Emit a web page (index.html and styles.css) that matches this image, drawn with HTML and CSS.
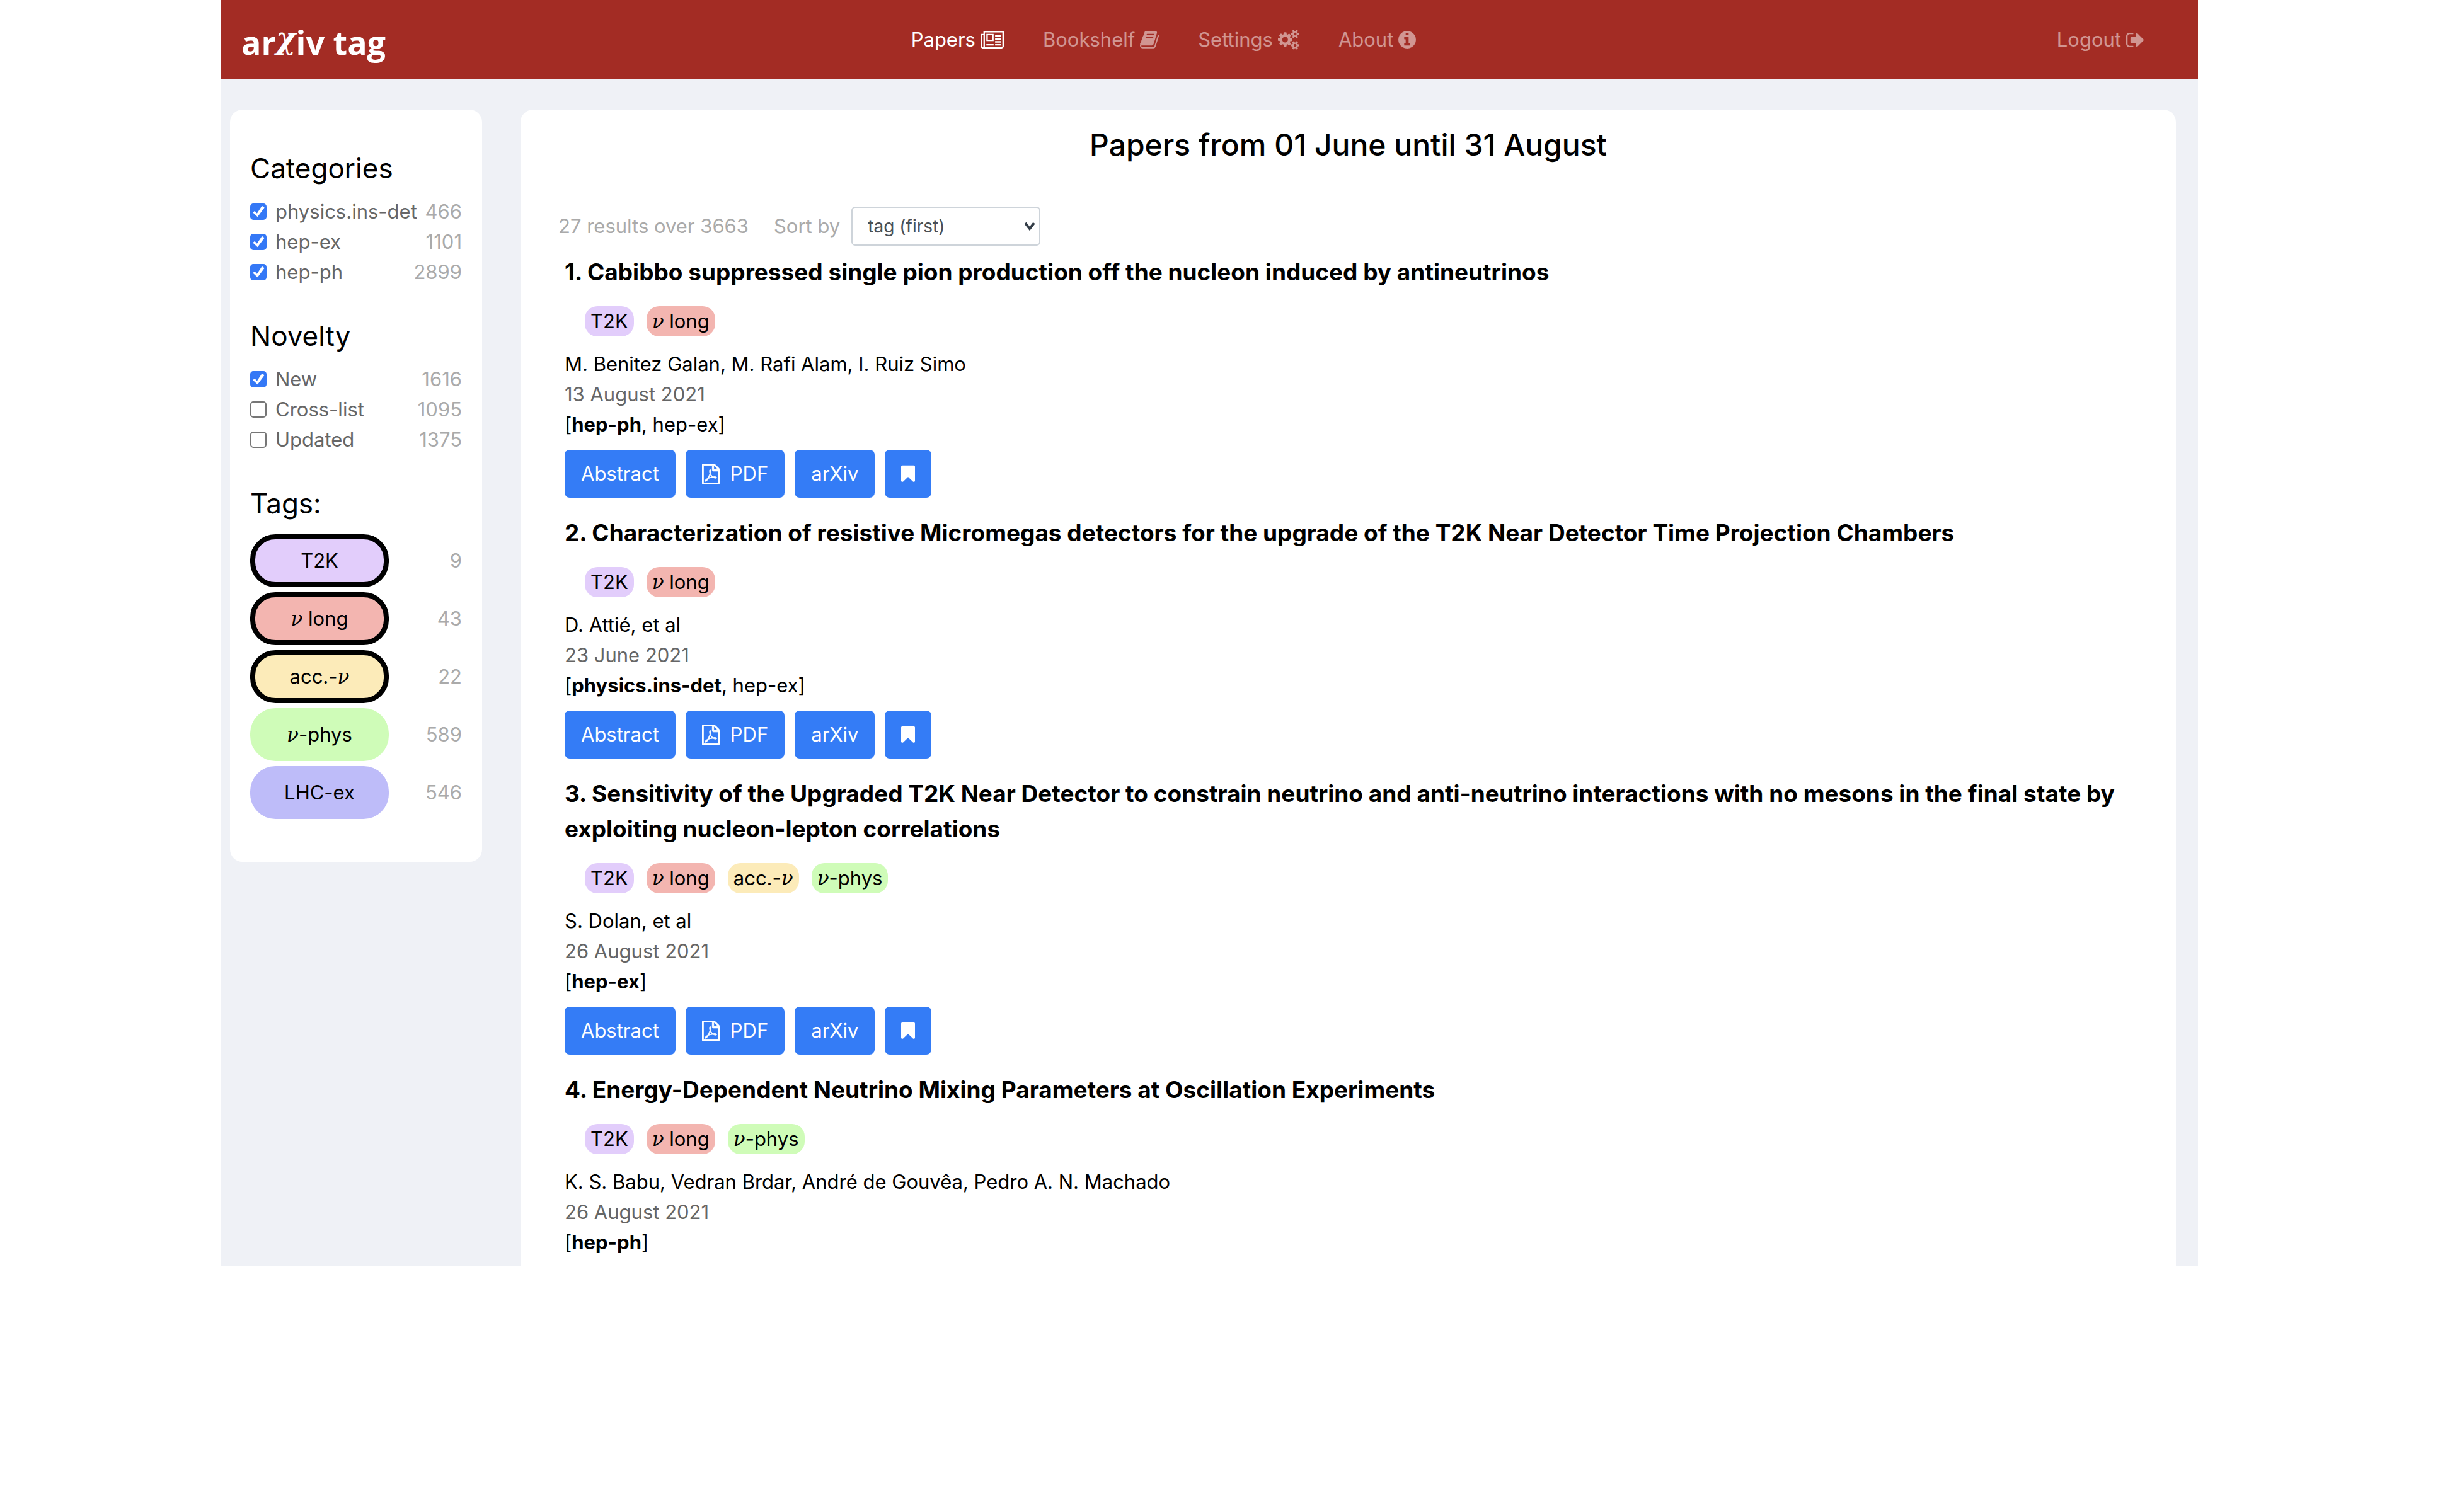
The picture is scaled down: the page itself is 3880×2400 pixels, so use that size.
FILE: index.html
```html
<!DOCTYPE html>
<html lang="en">
<head>
<meta charset="utf-8">
<title>arXiv tag</title>
<link rel="stylesheet" href="styles.css">
</head>
<body>
<svg class="sprite" aria-hidden="true">
  <symbol id="file-pdf" viewBox="0 0 1536 1792"><path d="M1468 380q28 28 48 76t20 88v1152q0 40-28 68t-68 28H96q-40 0-68-28t-28-68V96q0-40 28-68T96 0h896q40 0 88 20t76 48zm-444-244v376h376q-10-29-22-41l-313-313q-12-12-41-22zm384 1528V640H992q-40 0-68-28t-28-68V128H128v1536h1280zm-514-593q33 26 84 56 59-7 117-7 147 0 177 49 16 22 2 52 0 1-1 2l-2 2v1q-6 38-71 38-48 0-115-20t-130-53q-221 24-392 83-153 262-242 262-15 0-28-7l-24-12q-1-1-6-5-10-10-6-36 9-40 56-91.500t132-96.500q14-9 23 6 2 2 2 4 52-85 107-197 68-136 104-262-24-82-30.500-159.500t6.500-127.500q11-40 42-40h22q23 0 35 15 18 21 9 68-2 6-4 8 1 3 1 8v30q-2 123-14 192 55 164 146 238zm-576 411q52-24 137-158-51 40-87.500 84t-49.500 74zm398-920q-15 42-2 132 1-7 7-44 0-3 7-43 1-4 4-8-1-1-1-2t-1-2-1-3q-1-22-13-36 0 1-1 2v2zm-124 661q135-54 284-81-2-1-13-9.500t-16-13.500q-76-67-127-176-27 86-83 197-30 56-45 83zm646-16q-24-24-140-24 76 28 124 28 14 0 18-1 0-1-2-3z"/></symbol>
  <symbol id="bookmark" viewBox="0 0 1280 1536"><path d="M1164 0q23 0 44 9 33 13 52.500 41t19.500 62v1289q0 34-19.500 62t-52.500 41q-19 8-44 8-48 0-83-32l-441-424-441 424q-36 33-83 33-23 0-44-9-33-13-52.500-41T0 1401V112q0-34 19.500-62T72 9q21-9 44-9h1048z"/></symbol>
</svg>
<div class="app">
  <header class="navbar">
    <a class="brand" href="#">ar<span class="chi">χ</span>iv tag</a>
    <nav class="nav">
      <a class="nav-link active" href="#">Papers
        <svg class="icon-news" viewBox="0 0 2048 1536" aria-hidden="true"><path d="M1024 384H640v384h384V384zm128 768v128H512v-128h640zm0-896v640H512V256h640zm640 896v128h-512v-128h512zm0-256v128h-512V896h512zm0-256v128h-512V640h512zm0-256v128h-512V384h512zM256 1344V384H128v960q0 26 19 45t45 19 45-19 19-45zm1664 0V128H384v1216q0 33-11 64h1483q26 0 45-19t19-45zM2048 0v1344q0 80-56 136t-136 56H192q-80 0-136-56T0 1344V256h256V0h1792z"/></svg></a>
      <a class="nav-link" href="#">Bookshelf
        <svg class="icon-book" viewBox="0 0 1664 1536" aria-hidden="true"><path d="M1639 350q40 57 18 129l-275 906q-19 64-76.500 107.500T1183 1536H260q-77 0-148.500-53.500T12 1351q-24-67-2-127 0-4 3-27t4-37q1-8-3-21.500t-3-19.500q2-11 8-21t16.500-23.500T52 1051q23-38 45-91.500t30-91.500q3-10 .5-30t-.5-28q3-11 17-28t17-23q21-36 42-92t25-90q1-9-2.500-32t.5-28q4-13 22-30.500t22-22.500q19-26 42.500-84.500T340 283q1-8-3-25.500t-2-26.500q2-8 9-18t18-23 17-21q8-12 16.500-30.500t15-35 16-36 19.500-32T469.500 12t36-11.500T553 6l-1 3q38-9 51-9h761q74 0 114 56t18 130l-274 906q-36 119-71.500 153.500T1022 1280H153q-27 0-38 15-11 16-1 43 24 70 144 70h923q29 0 56-15.500t35-41.500l300-987q7-22 5-57 38 15 59 43zm-1064 2q-4 13 2 22.500t20 9.500h608q13 0 25.500-9.500T1247 352l21-64q4-13-2-22.500t-20-9.500H638q-13 0-25.500 9.500T596 288zm-83 256q-4 13 2 22.500t20 9.500h608q13 0 25.500-9.500T1164 608l21-64q4-13-2-22.500t-20-9.500H555q-13 0-25.500 9.500T513 544z"/></svg></a>
      <a class="nav-link" href="#">Settings
        <svg class="icon-cogs" viewBox="0 0 1920 1761" aria-hidden="true"><path d="M896 880q0-106-75-181t-181-75-181 75-75 181 75 181 181 75 181-75 75-181zm768 512q0-52-38-90t-90-38-90 38-38 90q0 53 37.500 90.500t90.500 37.500 90.500-37.500 37.500-90.500zm0-1024q0-52-38-90t-90-38-90 38-38 90q0 53 37.500 90.500T1536 496t90.500-37.500T1664 368zm-384 421v185q0 10-7 19.500t-16 10.500l-155 24q-11 35-32 76 34 48 90 115 7 11 7 20 0 12-7 19-23 30-82.500 89.500T999 1387q-11 0-21-7l-115-90q-37 19-77 31-11 108-23 155-7 24-30 24H547q-11 0-20-7.500t-10-17.500l-23-153q-34-10-75-31l-118 89q-7 7-20 7-11 0-21-8-144-133-144-160 0-9 7-19 10-14 41-53t47-61q-23-44-35-82l-152-24q-10-1-17-9.500T0 951V766q0-10 7-19.500T23 736l155-24q11-35 32-76-34-48-90-115-7-11-7-20 0-12 7-20 22-30 82-89t79-59q11 0 21 7l115 90q34-18 77-32 11-108 23-154 7-24 30-24h186q11 0 20 7.500t10 17.500l23 153q34 10 75 31l118-89q8-7 20-7 11 0 21 8 144 133 144 160 0 8-7 19-12 16-42 54t-45 60q23 48 34 82l152 23q10 2 17 10.500t7 19.500zm640 533v140q0 16-149 31-12 27-30 52 51 113 51 138 0 4-4 7-122 71-124 71-8 0-46-47t-52-68q-20 2-30 2t-30-2q-14 21-52 68t-46 47q-2 0-124-71-4-3-4-7 0-25 51-138-18-25-30-52-149-15-149-31v-140q0-16 149-31 13-29 30-52-51-113-51-138 0-4 4-7 4-2 35-20t59-34 30-16q8 0 46 46.500t52 67.500q20-2 30-2t30 2q51-71 92-112l6-2q4 0 124 70 4 3 4 7 0 25-51 138 17 23 30 52 149 15 149 31zm0-1024v140q0 16-149 31-12 27-30 52 51 113 51 138 0 4-4 7-122 71-124 71-8 0-46-47t-52-68q-20 2-30 2t-30-2q-14 21-52 68t-46 47q-2 0-124-71-4-3-4-7 0-25 51-138-18-25-30-52-149-15-149-31V298q0-16 149-31 13-29 30-52-51-113-51-138 0-4 4-7 4-2 35-20t59-34 30-16q8 0 46 46.500t52 67.500q20-2 30-2t30 2q51-71 92-112l6-2q4 0 124 70 4 3 4 7 0 25-51 138 17 23 30 52 149 15 149 31z"/></svg></a>
      <a class="nav-link" href="#">About
        <svg class="icon-info" viewBox="0 0 1536 1536" aria-hidden="true"><path d="M1024 1248v-160q0-14-9-23t-23-9h-96V544q0-14-9-23t-23-9H544q-14 0-23 9t-9 23v160q0 14 9 23t23 9h96v320h-96q-14 0-23 9t-9 23v160q0 14 9 23t23 9h448q14 0 23-9t9-23zM896 352V192q0-14-9-23t-23-9H672q-14 0-23 9t-9 23v160q0 14 9 23t23 9h192q14 0 23-9t9-23zm640 416q0 209-103 385.500T1153.500 1433 768 1536t-385.500-103T103 1153.500 0 768t103-385.500T382.500 103 768 0t385.500 103T1433 382.500 1536 768z"/></svg></a>
    </nav>
    <a class="nav-link logout" href="#">Logout
      <svg class="icon-logout" viewBox="0 0 1568 1280" aria-hidden="true"><path d="M640 1184q0 4 1 20t.5 26.500-3 23.500-10 19.500-20.500 6.500H288q-119 0-203.500-84.500T0 992V288Q0 169 84.500 84.500T288 0h320q13 0 22.500 9.500T640 32q0 4 1 20t.5 26.500-3 23.500-10 19.500T608 128H288q-66 0-113 47t-47 113v704q0 66 47 113t113 47h312l11.500 1 11.500 3 8 5.500 7 9 2 13.500zm928-544q0 26-19 45l-544 544q-19 19-45 19t-45-19-19-45V896H448q-26 0-45-19t-19-45V448q0-26 19-45t45-19h448V96q0-26 19-45t45-19 45 19l544 544q19 19 19 45z"/></svg></a>
  </header>

  <div class="layout">
    <aside class="card sidebar">
      <section class="filter">
        <h2>Categories</h2>
        <label class="check"><input type="checkbox" checked><span>physics.ins-det</span><span class="count">466</span></label>
        <label class="check"><input type="checkbox" checked><span>hep-ex</span><span class="count">1101</span></label>
        <label class="check"><input type="checkbox" checked><span>hep-ph</span><span class="count">2899</span></label>
      </section>
      <section class="filter">
        <h2>Novelty</h2>
        <label class="check"><input type="checkbox" checked><span>New</span><span class="count">1616</span></label>
        <label class="check"><input type="checkbox"><span>Cross-list</span><span class="count">1095</span></label>
        <label class="check"><input type="checkbox"><span>Updated</span><span class="count">1375</span></label>
      </section>
      <section class="filter">
        <h2>Tags:</h2>
        <div class="tag-list">
          <div class="tag-row"><button type="button" class="tag t2k selected">T2K</button><span class="count">9</span></div>
          <div class="tag-row"><button type="button" class="tag nulong selected"><i>ν</i> long</button><span class="count">43</span></div>
          <div class="tag-row"><button type="button" class="tag accnu selected">acc.-<i>ν</i></button><span class="count">22</span></div>
          <div class="tag-row"><button type="button" class="tag nuphys"><i>ν</i>-phys</button><span class="count">589</span></div>
          <div class="tag-row"><button type="button" class="tag lhc">LHC-ex</button><span class="count">546</span></div>
        </div>
      </section>
    </aside>

    <main class="card content">
      <h1>Papers from 01 June until 31 August</h1>
      <div class="toolbar">
        <span>27 results over 3663</span>
        <label for="sort">Sort by</label>
        <div class="select">
          <select id="sort"><option>tag (first)</option></select>
          <svg viewBox="0 0 18 20" aria-hidden="true"><path d="M2 5l7 9 7-9" fill="none" stroke="currentColor" stroke-width="4"/></svg>
        </div>
      </div>

      <article class="paper">
        <h3>1. Cabibbo suppressed single pion production off the nucleon induced by antineutrinos</h3>
        <div class="labels"><span class="label t2k">T2K</span><span class="label nulong"><i>ν</i> long</span></div>
        <p>M. Benitez Galan, M. Rafi Alam, I. Ruiz Simo</p>
        <p class="date">13 August 2021</p>
        <p>[<b>hep-ph</b>, hep-ex]</p>
        <div class="actions"><button type="button">Abstract</button><button type="button"><svg class="icon-pdf" aria-hidden="true"><use href="#file-pdf"/></svg>PDF</button><button type="button">arXiv</button><button type="button" aria-label="Bookmark"><svg class="icon-mark" aria-hidden="true"><use href="#bookmark"/></svg></button></div>
      </article>

      <article class="paper">
        <h3>2. Characterization of resistive Micromegas detectors for the upgrade of the T2K Near Detector Time Projection Chambers</h3>
        <div class="labels"><span class="label t2k">T2K</span><span class="label nulong"><i>ν</i> long</span></div>
        <p>D. Attié, et al</p>
        <p class="date">23 June 2021</p>
        <p>[<b>physics.ins-det</b>, hep-ex]</p>
        <div class="actions"><button type="button">Abstract</button><button type="button"><svg class="icon-pdf" aria-hidden="true"><use href="#file-pdf"/></svg>PDF</button><button type="button">arXiv</button><button type="button" aria-label="Bookmark"><svg class="icon-mark" aria-hidden="true"><use href="#bookmark"/></svg></button></div>
      </article>

      <article class="paper">
        <h3>3. Sensitivity of the Upgraded T2K Near Detector to constrain neutrino and anti-neutrino interactions with no mesons in the final state by exploiting nucleon-lepton correlations</h3>
        <div class="labels"><span class="label t2k">T2K</span><span class="label nulong"><i>ν</i> long</span><span class="label accnu">acc.-<i>ν</i></span><span class="label nuphys"><i>ν</i>-phys</span></div>
        <p>S. Dolan, et al</p>
        <p class="date">26 August 2021</p>
        <p>[<b>hep-ex</b>]</p>
        <div class="actions"><button type="button">Abstract</button><button type="button"><svg class="icon-pdf" aria-hidden="true"><use href="#file-pdf"/></svg>PDF</button><button type="button">arXiv</button><button type="button" aria-label="Bookmark"><svg class="icon-mark" aria-hidden="true"><use href="#bookmark"/></svg></button></div>
      </article>

      <article class="paper">
        <h3>4. Energy-Dependent Neutrino Mixing Parameters at Oscillation Experiments</h3>
        <div class="labels"><span class="label t2k">T2K</span><span class="label nulong"><i>ν</i> long</span><span class="label nuphys"><i>ν</i>-phys</span></div>
        <p>K. S. Babu, Vedran Brdar, André de Gouvêa, Pedro A. N. Machado</p>
        <p class="date">26 August 2021</p>
        <p>[<b>hep-ph</b>]</p>
      </article>
    </main>
  </div>
</div>
</body>
</html>
```

FILE: styles.css
```css
* { box-sizing: border-box; }

body {
  margin: 0;
  background: #fff;
  color: #000;
  font-family: Inter, "Liberation Sans", sans-serif;
  font-size: 31px;
  line-height: 48px;
}

h1, h2, h3, p { margin: 0; }
svg { fill: currentColor; }
.sprite { display: none; }

.app {
  margin: 0 392px 0 351px;
  background: #eff1f6;
}

/* Top bar */
.navbar {
  display: grid;
  grid-template-columns: 1fr auto 1fr;
  align-items: center;
  height: 126px;
  padding: 0 86px 0 32px;
  background: #a32c24;
}

.brand {
  justify-self: start;
  color: #fff;
  font-family: "Open Sans", "Noto Sans", sans-serif;
  font-size: 52px;
  font-weight: 700;
  text-decoration: none;
}

.chi {
  display: inline-block;
  font-family: "DejaVu Serif", serif;
  font-size: 48px;
  font-style: italic;
  line-height: 1;
  vertical-align: 10px;
}

.nav {
  display: flex;
  gap: 62px;
  padding-right: 92px;
}

.nav-link {
  display: flex;
  align-items: center;
  gap: 8px;
  color: rgba(255, 255, 255, 0.5);
  text-decoration: none;
}

.nav-link.active { color: #fff; }
.logout { justify-self: end; }

.icon-news { width: 37px; height: 28px; }
.icon-book { width: 30px; height: 28px; }
.icon-cogs { width: 34px; height: 32px; }
.icon-info { width: 28px; height: 28px; }
.icon-logout { width: 28px; height: 23px; }

/* Page body */
.layout {
  display: grid;
  grid-template-columns: 400px 1fr;
  align-items: start;
  gap: 61px;
  padding: 48px 35px 0 14px;
}

.card {
  border-radius: 20px;
  background: #fff;
}

/* Filters */
.sidebar {
  display: grid;
  gap: 48px;
  padding: 64px 32px 68px;
}

.filter h2 {
  margin-bottom: 16px;
  font-size: 44px;
  font-weight: 400;
  line-height: 58px;
}

.check {
  display: flex;
  align-items: center;
  color: #666;
  white-space: nowrap;
}

.check input {
  appearance: none;
  width: 26px;
  height: 26px;
  margin: 0 14px 0 0;
  border: 2px solid #767676;
  border-radius: 5px;
  background: #fff;
}

.check input:checked {
  border-color: #3478f6;
  background: #3478f6;
}

.check input:checked::before {
  content: "";
  display: block;
  height: 22px;
  background: #fff;
  clip-path: polygon(10% 56%, 24% 44%, 40% 62%, 76% 8%, 94% 20%, 44% 88%);
}

.count {
  margin-left: auto;
  color: #aaa;
}

.tag-list {
  display: grid;
  gap: 8px;
  margin-top: 20px;
}

.tag-row {
  display: flex;
  align-items: center;
}

.tag {
  width: 220px;
  height: 84px;
  padding: 0;
  border: 0;
  border-radius: 40px;
  color: #000;
  font: inherit;
}

.tag.selected { border: 8px solid #000; }

i { font-family: "DejaVu Serif", serif; }

.t2k { background: #e2cdfb; }
.nulong { background: #f3b5b0; }
.accnu { background: #fcebb9; }
.nuphys { background: #cffcb8; }
.lhc { background: #bebcf9; }

/* Paper list */
.content {
  padding: 26px 70px 14px;
  border-radius: 20px 20px 0 0;
}

h1 {
  font-size: 48px;
  font-weight: 500;
  line-height: 60px;
  text-align: center;
}

.toolbar {
  display: flex;
  align-items: center;
  margin: 68px 0 14px -10px;
  color: #aaa;
}

.toolbar label { margin: 0 18px 0 40px; }

.select {
  display: grid;
  align-items: center;
  width: 300px;
}

.select select, .select svg { grid-area: 1 / 1; }

.select select {
  appearance: none;
  width: 100%;
  height: 62px;
  padding: 0 24px;
  border: 2px solid #ced4da;
  border-radius: 6px;
  background: #fff;
  color: #495057;
  font: inherit;
  font-size: 28px;
}

.select svg {
  z-index: 1;
  justify-self: end;
  width: 18px;
  height: 20px;
  margin-right: 8px;
  color: #333d47;
  pointer-events: none;
}

.paper { margin-bottom: 28px; }
.paper:last-child { margin-bottom: 0; }

.paper h3 {
  font-size: 37px;
  font-weight: 700;
  line-height: 56px;
}

.labels {
  display: flex;
  gap: 20px;
  margin: 26px 0 20px 32px;
}

.label {
  height: 48px;
  padding: 0 9px;
  border-radius: 20px;
}

.date { color: #666; }

.actions {
  display: flex;
  gap: 16px;
  margin-top: 16px;
}

.actions button {
  display: flex;
  align-items: center;
  justify-content: center;
  height: 76px;
  padding: 0 26px;
  border: 0;
  border-radius: 8px;
  background: #347cf6;
  color: #fff;
  font: inherit;
}

.icon-pdf {
  width: 28px;
  height: 33px;
  margin-right: 17px;
  stroke: currentColor;
  stroke-width: 48px;
}

.icon-mark { width: 22px; height: 28px; }
```
